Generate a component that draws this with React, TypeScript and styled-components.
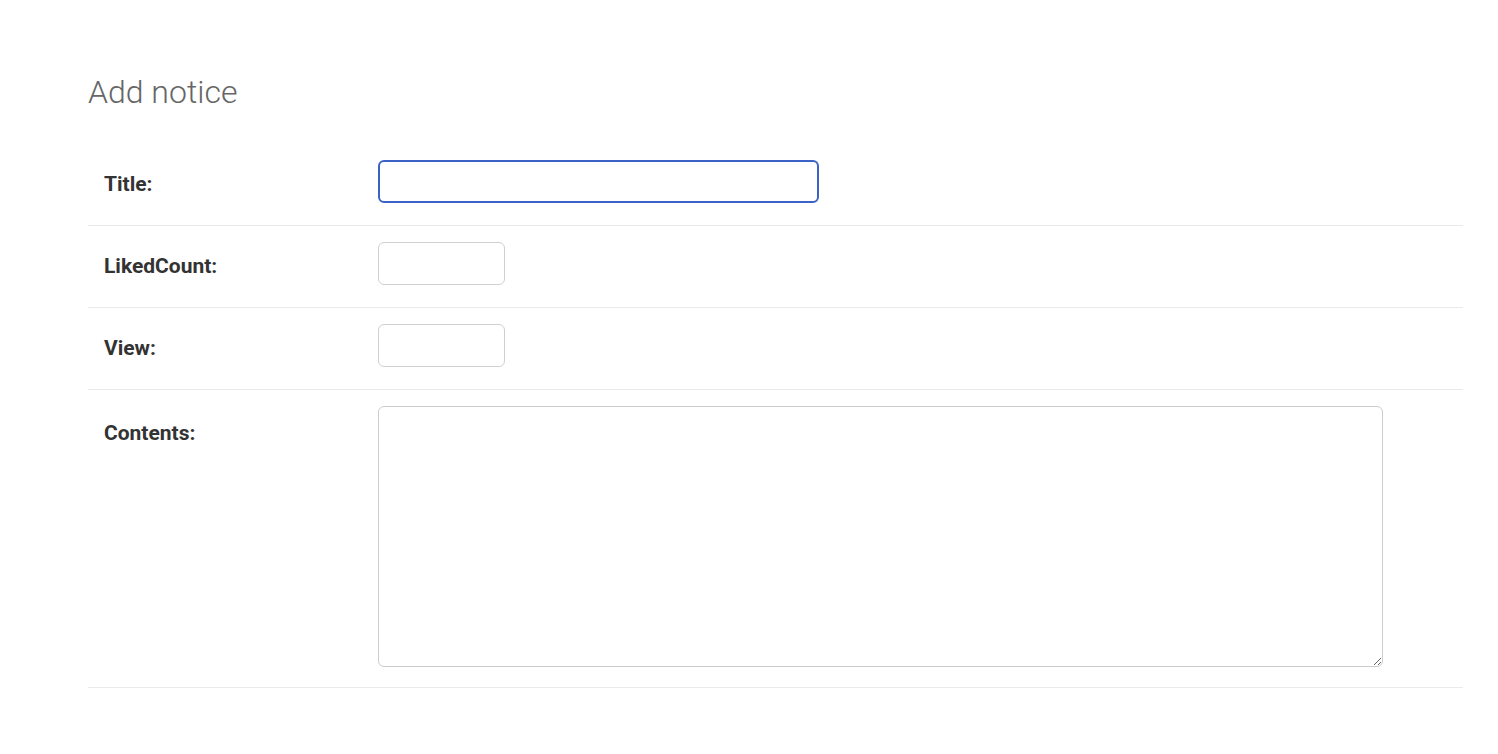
import React from "react";
import styled, { createGlobalStyle } from "styled-components";

const Global = createGlobalStyle`
  html, body { margin: 0; padding: 0; background: #fff; }
  body { font-family: Roboto, "Liberation Sans", sans-serif; color: #333; }
  * { box-sizing: border-box; }
`;

const Page = styled.main`
  padding: 72px 35px 40px 88px;
  width: 1498px;
`;

const Heading = styled.h1`
  margin: 0 0 32px 0;
  font-family: Roboto, "Liberation Sans", sans-serif;
  font-weight: 300;
  font-size: 32px;
  line-height: 40px;
  color: #666;
`;

const Fieldset = styled.fieldset`
  margin: 0;
  padding: 0;
  border: none;
  min-width: 0;
`;

const Row = styled.div<{ $bottom: number }>`
  display: flex;
  align-items: flex-start;
  padding: 16px 16px ${(p) => p.$bottom}px 16px;
  border-bottom: 1px solid #eaeaea;
`;

const Label = styled.label<{ $offset?: number }>`
  flex: 0 0 274px;
  padding-top: ${(p) => p.$offset ?? 12}px;
  font-size: 21px;
  line-height: 25px;
  font-weight: 700;
  color: #333;
`;

const TextInput = styled.input<{ $width: number; $focused?: boolean }>`
  display: block;
  width: ${(p) => p.$width}px;
  height: 43px;
  margin: 0;
  padding: 6px 10px;
  font-family: Roboto, "Liberation Sans", sans-serif;
  font-size: 18px;
  border-radius: 6px;
  border: ${(p) => (p.$focused ? "2.5px solid #3b62c6" : "1.5px solid #d0d0d0")};
  background: #fff;
  outline: none;
`;

const TextArea = styled.textarea`
  display: block;
  width: 1005px;
  height: 261px;
  margin: 0;
  padding: 8px 10px;
  font-family: Roboto, "Liberation Sans", sans-serif;
  font-size: 18px;
  border-radius: 6px;
  border: 1.5px solid #cccccc;
  background: #fff;
  outline: none;
  resize: both;
`;

export default function App() {
  return (
    <>
      <Global />
      <Page>
        <Heading>Add notice</Heading>
        <Fieldset>
          <Row $bottom={22}>
            <Label htmlFor="title">Title:</Label>
            <TextInput id="title" type="text" $width={441} $focused />
          </Row>
          <Row $bottom={22}>
            <Label htmlFor="liked">LikedCount:</Label>
            <TextInput id="liked" type="text" $width={127} />
          </Row>
          <Row $bottom={22}>
            <Label htmlFor="view">View:</Label>
            <TextInput id="view" type="text" $width={127} />
          </Row>
          <Row $bottom={20}>
            <Label htmlFor="contents" $offset={15}>Contents:</Label>
            <TextArea id="contents" />
          </Row>
        </Fieldset>
      </Page>
    </>
  );
}
